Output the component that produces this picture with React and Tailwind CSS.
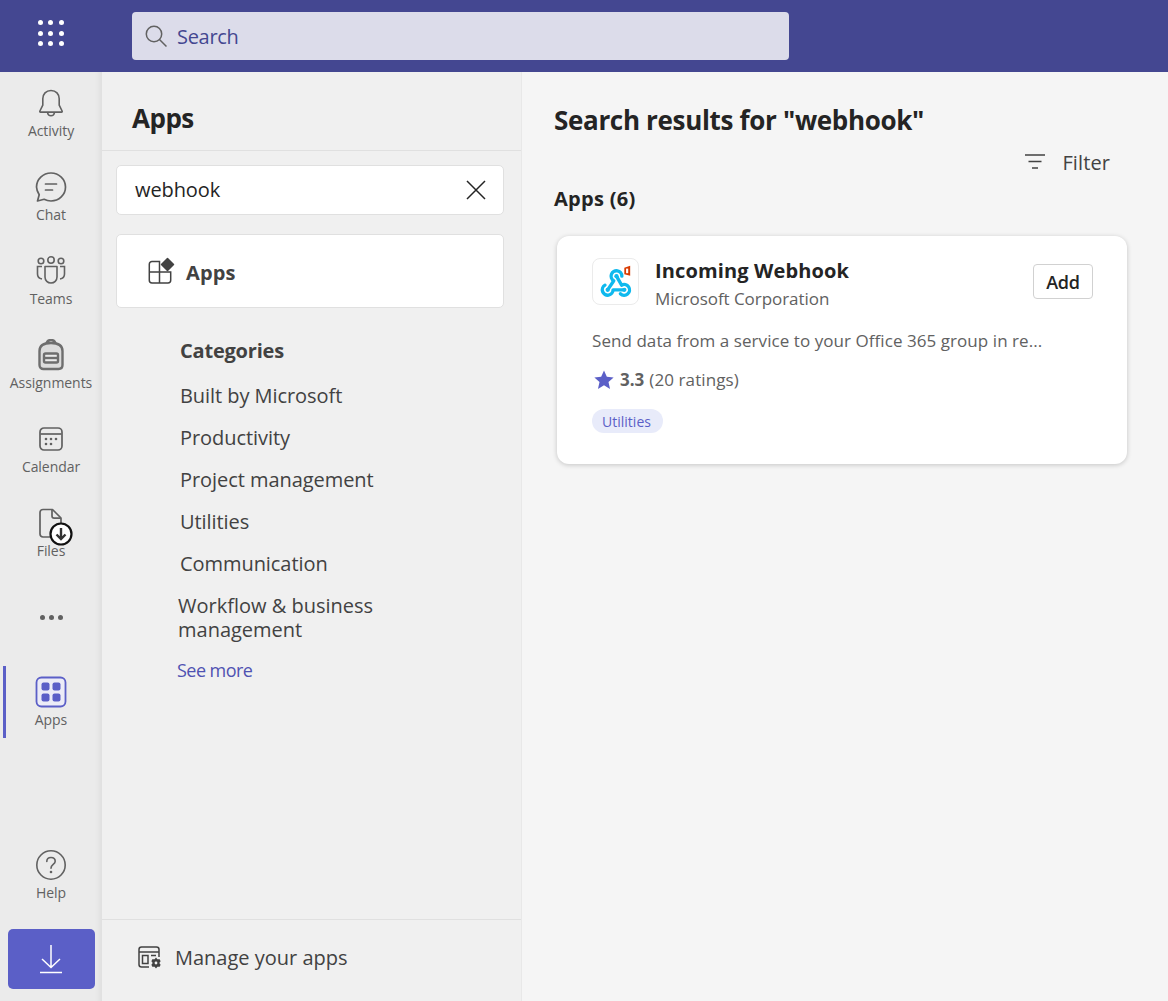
import React from "react";

const font = { fontFamily: '"Open Sans", "Noto Sans", sans-serif' };

const Bell = () => (
  <svg width="32" height="32" viewBox="0 0 32 32" fill="none" stroke="#616161" strokeWidth="1.6">
    <path d="M16 3.500c-5 0-8.200 3.600-8.200 8.300v6.400L4.900 24c-.3.600 0 1.100.6 1.100h21c.6 0 .9-.5.6-1.100l-2.900-5.800v-6.400c0-4.700-3.200-8.300-8.200-8.300z" strokeLinejoin="round" />
    <path d="M12.500 25.500c.3 2 1.700 3.200 3.500 3.200s3.200-1.200 3.500-3.200" />
  </svg>
);

const ChatIcon = () => (
  <svg width="32" height="32" viewBox="0 0 32 32" fill="none" stroke="#616161" strokeWidth="1.7">
    <path d="M16 2c8 0 14.500 6.200 14.500 14S24 30 16 30c-2.500 0-4.800-.6-6.900-1.700L2.500 30l1.700-6.300C2.900 21.500 1.500 19 1.500 16 1.500 8.200 8 2 16 2z" strokeLinejoin="round" />
    <path d="M10.500 13h11M10.500 19h7" strokeLinecap="round" />
  </svg>
);

const TeamsIcon = () => (
  <svg width="32" height="32" viewBox="0 0 32 32" fill="none" stroke="#616161" strokeWidth="1.6">
    <circle cx="16" cy="5" r="3.200" />
    <circle cx="6" cy="6" r="2.800" />
    <circle cx="26" cy="6" r="2.800" />
    <path d="M10 11.500h12v10.500c0 3.500-2.700 6-6 6s-6-2.500-6-6z" strokeLinejoin="round" />
    <path d="M7 11.500H2.500V19c0 2.700 1.700 4.500 4.500 5M25 11.500h4.500V19c0 2.700-1.700 4.500-4.500 5" />
  </svg>
);

const BagIcon = () => (
  <svg width="32" height="32" viewBox="0 0 32 32" fill="none" stroke="#6e6e6e" strokeWidth="2.400">
    <path d="M11.500 4.500C12 2 14 1 16 1s4 1 4.500 3.500" />
    <path d="M4.500 12c0-5 4-8 11.500-8s11.500 3 11.500 8v14c0 2.200-1.500 4-4 4H8.500c-2.500 0-4-1.800-4-4z" fill="#dcdcdc" />
    <rect x="9" y="14.500" width="14" height="9" rx="1.500" fill="#ebebeb" />
    <path d="M9 19h14" />
  </svg>
);

const CalendarIcon = () => (
  <svg width="32" height="32" viewBox="0 0 32 32" fill="none" stroke="#616161" strokeWidth="1.7">
    <rect x="5" y="5" width="22" height="22" rx="4" />
    <path d="M5.500 11h21" />
    <g fill="#616161" stroke="none">
      <circle cx="16" cy="16" r="1.300" />
      <circle cx="21" cy="16" r="1.300" />
      <circle cx="11" cy="16" r="1.300" />
      <circle cx="11" cy="21" r="1.300" />
      <circle cx="16" cy="21" r="1.300" />
    </g>
  </svg>
);

const FilesIcon = () => (
  <div className="relative w-8 h-8">
    <svg width="32" height="32" viewBox="0 0 32 32" fill="none" stroke="#616161" strokeWidth="1.7">
      <path d="M8 2.500h9.500L26 11v16c0 1.600-1.200 3-3 3H8c-1.800 0-3-1.400-3-3V5.500c0-1.600 1.200-3 3-3z" strokeLinejoin="round" />
      <path d="M17 3v6c0 1.400.8 2.200 2.200 2.200H26" />
    </svg>
    <div className="absolute left-[14px] top-[15px] w-[24px] h-[24px]">
      <svg width="24" height="24" viewBox="0 0 24 24" fill="none">
        <circle cx="12" cy="12" r="10.500" fill="#ffffff" stroke="#111111" strokeWidth="2.200" />
        <path d="M12 6v11M7.500 12.500l4.500 4.500 4.500-4.500" stroke="#333333" strokeWidth="2.400" />
      </svg>
    </div>
  </div>
);

const AppsRailIcon = () => (
  <svg width="32" height="32" viewBox="0 0 32 32" fill="none">
    <rect x="1.500" y="1.500" width="29" height="29" rx="5" stroke="#5b5fc7" strokeWidth="1.800" fill="#ececf7" />
    <rect x="6.500" y="6.500" width="8" height="8" rx="2" fill="#5b5fc7" />
    <rect x="17.500" y="6.500" width="8" height="8" rx="2" fill="#5b5fc7" />
    <rect x="6.500" y="17.500" width="8" height="8" rx="2" fill="#5b5fc7" />
    <rect x="17.500" y="17.500" width="8" height="8" rx="2" fill="#5b5fc7" />
  </svg>
);

const HelpIcon = () => (
  <svg width="32" height="32" viewBox="0 0 32 32" fill="none" stroke="#616161" strokeWidth="1.600">
    <circle cx="16" cy="16" r="14.200" />
    <path d="M11.800 12.500c0-2.500 1.800-4 4.200-4s4.200 1.500 4.200 3.700c0 3.300-4.200 3.300-4.200 7" strokeLinecap="round" />
    <circle cx="16" cy="23" r="1.300" fill="#616161" stroke="none" />
  </svg>
);

const RailItem = ({ icon, label }) => (
  <div className="h-[84px] flex flex-col items-center">
    {icon}
    <span className="text-[14px] leading-[24px] tracking-[-0.05px] text-[#616161]">{label}</span>
  </div>
);

const WebhookLogo = () => (
  <svg width="46" height="46" viewBox="0 0 46 46" fill="none">
    <g stroke="#0fb9ee" strokeWidth="3.400" strokeLinecap="round" strokeLinejoin="round">
      <path d="M15 31l6.250-9.240A5.500 5.500 0 1 1 29.500 17" />
      <path d="M24 17l5.250 9.240A5.500 5.500 0 1 1 28 35" />
      <path d="M32 31H20.500A5.500 5.500 0 1 1 12.250 26.240" />
    </g>
    <circle cx="24" cy="17" r="2.200" fill="#0fb9ee" />
    <circle cx="15" cy="31" r="2.200" fill="#0fb9ee" />
    <circle cx="32" cy="31" r="2.200" fill="#0fb9ee" />
    <path d="M32 8.500l6-2v10l-6-1.500z" fill="#d83b01" />
    <path d="M33.800 9.300h2.200v4.700h-2.200z" fill="#ffffff" />
  </svg>
);

const categories = ["Built by Microsoft", "Productivity", "Project management", "Utilities", "Communication"];

export default function App() {
  return (
    <div className="w-full h-screen overflow-hidden flex flex-col bg-[#f5f5f5]" style={font}>
      {/* Top bar */}
      <header className="h-[72px] shrink-0 bg-[#444791] flex items-center">
        <div className="w-[102px] flex justify-center pr-[1px] -mt-[6px]">
          <div className="grid grid-cols-3 gap-x-[5.5px] gap-y-[5.5px]">
            {[0, 1, 2, 3, 4, 5, 6, 7, 8].map((i) => (
              <span key={i} className="w-[5px] h-[5px] rounded-full bg-white" />
            ))}
          </div>
        </div>
        <div className="ml-[30px] w-[657px] h-[48px] rounded-[4px] bg-[#dcdcea] flex items-center pl-[12px]">
          <svg width="24" height="24" viewBox="0 0 24 24" fill="none" stroke="#616161" strokeWidth="1.500">
            <circle cx="10" cy="10" r="7.700" />
            <path d="M15.500 15.500l7 7" />
          </svg>
          <span className="ml-[9px] mt-[1px] text-[20px] text-[#444791] tracking-[-0.3px]">Search</span>
        </div>
      </header>

      <div className="flex-1 flex min-h-0">
        {/* Rail */}
        <nav className="relative w-[102px] shrink-0 bg-[#ebebeb] pt-[15px] flex flex-col shadow-[inset_-6px_0_5px_-3px_rgba(0,0,0,0.05)]">
          <RailItem icon={<Bell />} label="Activity" />
          <RailItem icon={<ChatIcon />} label="Chat" />
          <RailItem icon={<TeamsIcon />} label="Teams" />
          <RailItem icon={<BagIcon />} label="Assignments" />
          <RailItem icon={<CalendarIcon />} label="Calendar" />
          <RailItem icon={<FilesIcon />} label="Files" />
          <div className="h-[85px] flex justify-center pt-[24px] gap-[4px]">
            <span className="w-[5px] h-[5px] rounded-full bg-[#616161]" />
            <span className="w-[5px] h-[5px] rounded-full bg-[#616161]" />
            <span className="w-[5px] h-[5px] rounded-full bg-[#616161]" />
          </div>
          <RailItem icon={<AppsRailIcon />} label="Apps" />
          <span className="absolute left-[3px] top-[594px] w-[3px] h-[72px] bg-[#5b5fc7]" />
          <div className="mt-auto">
            <RailItem icon={<HelpIcon />} label="Help" />
            <div className="mx-[8px] mb-[12px] -mt-[4px] w-[87px] h-[60px] rounded-[5px] bg-[#5b5fc7] flex items-center justify-center pr-[2px]">
              <svg width="24" height="30" viewBox="0 0 24 30" fill="none" stroke="#ffffff" strokeWidth="1.500">
                <path d="M12 1v22M3 15l9 8.500 9-8.500M1 28.500h22" />
              </svg>
            </div>
          </div>
        </nav>

        {/* Middle panel */}
        <aside className="w-[420px] shrink-0 bg-[#f0f0f0] border-r border-[#e8e8e8] flex flex-col">
          <div className="h-[79px] shrink-0 border-b border-[#e0e0e0] pl-[30px] pt-[27px]">
            <h1 className="text-[26px] leading-[38px] font-bold text-[#242424] tracking-[-0.5px]">Apps</h1>
          </div>
          <div className="ml-[14px] mr-[17px] mt-[14px] h-[50px] bg-white border border-[#e0e0e0] rounded-[5px] flex items-center justify-between pl-[18px] pr-[16px]">
            <span className="text-[20px] text-[#242424] tracking-[-0.1px]">webhook</span>
            <svg width="22" height="22" viewBox="0 0 22 22" fill="none" stroke="#242424" strokeWidth="1.500">
              <path d="M2 2l18 18M20 2L2 20" />
            </svg>
          </div>
          <div className="ml-[14px] mr-[17px] mt-[19px] h-[74px] bg-white border border-[#e0e0e0] rounded-[5px] flex items-center pl-[30px]">
            <svg width="28" height="28" viewBox="0 0 28 28" fill="none" stroke="#424242" strokeWidth="1.500">
              <path d="M12.500 4.500H5c-1.500 0-2.700 1.100-2.700 2.700v16c0 1.500 1.200 2.700 2.700 2.700h16c1.500 0 2.700-1.200 2.700-2.700V15H12.500zM12.500 15v11M2.500 15h10" />
              <path d="M20.500 1.500l6 6-6 6-6-6z" fill="#424242" strokeLinejoin="round" />
            </svg>
            <span className="ml-[11px] mt-[3px] text-[20px] font-bold text-[#424242] tracking-[0.1px]">Apps</span>
          </div>
          <div className="pl-[76px] pt-[27px] flex-1">
            <div className="pl-[2px] text-[20px] leading-[32px] font-bold text-[#424242] tracking-[-0.2px]">Categories</div>
            {categories.map((c, i) => (
              <div key={c} className={`pl-[2px] text-[20px] leading-[24px] text-[#424242] tracking-[-0.06px] ${i === 0 ? "mt-[17px]" : "mt-[18px]"}`}>
                {c}
              </div>
            ))}
            <div className="mt-[18px] text-[20px] leading-[24px] text-[#424242]">
              Workflow & business
              <br />
              management
            </div>
            <div className="-ml-[1px] mt-[16px] text-[18px] leading-[24px] text-[#4f52b2] tracking-[-0.55px]">See more</div>
          </div>
          <div className="h-[82px] shrink-0 border-t border-[#e0e0e0] flex items-center pl-[35px] pb-[5px]">
            <svg width="26" height="26" viewBox="0 0 26 26" fill="none" stroke="#424242" strokeWidth="1.500">
              <path d="M12 22H4.500C2.800 22 2 21 2 19.500v-15C2 3 3 2 4.500 2h15C21 2 22 3 22 4.500V12M2.500 7h19" />
              <path d="M5.500 10.500h5.500v8H5.500zM14 10.500h5" />
              <path d="M19 12.500l1.400 1.800h2.300l.9 2-1.300 1.700 1.300 1.700-.9 2h-2.300L19 23.500l-1.400-1.800h-2.300l-.9-2 1.300-1.700-1.300-1.700.9-2h2.300z" fill="#424242" stroke="none" />
              <circle cx="19" cy="18" r="1.400" fill="#f0f0f0" stroke="none" />
            </svg>
            <span className="ml-[12px] text-[20px] text-[#424242]">Manage your apps</span>
          </div>
        </aside>

        {/* Results */}
        <main className="flex-1 min-w-0 pl-[32px] pr-[40px] pt-[28px]">
          <h2 className="text-[26px] leading-[40px] font-bold text-[#242424] tracking-[-0.33px]">Search results for "webhook"</h2>
          <div className="flex justify-end items-center mt-[11px] pr-[18px] h-[24px]">
            <svg width="22" height="18" viewBox="0 0 22 18" fill="none" stroke="#424242" strokeWidth="1.400" className="-mt-[3px]">
              <path d="M1 2h20M4.500 8.500h13M8 15h6" />
            </svg>
            <span className="ml-[16px] text-[20px] font-medium text-[#424242] tracking-[0.1px]">Filter</span>
          </div>
          <h3 className="mt-[10px] text-[20px] leading-[28px] font-bold text-[#242424] tracking-[0.3px]">Apps (6)</h3>
          <div className="mt-[23px] ml-[3px] w-[570px] h-[228px] bg-white rounded-[12px] shadow-[0_1px_5px_rgba(0,0,0,0.2)] pl-[35px] pr-[34px] pt-[22px]">
            <div className="flex items-start">
              <div className="w-[47px] h-[47px] rounded-[8px] border border-[#ebebeb] flex items-center justify-center">
                <WebhookLogo />
              </div>
              <div className="ml-[16px] flex-1">
                <div className="text-[20px] leading-[26px] font-bold text-[#242424] tracking-[0.13px]">Incoming Webhook</div>
                <div className="text-[17px] leading-[30px] text-[#616161] tracking-[-0.05px]">Microsoft Corporation</div>
              </div>
              <div className="mt-[6px] w-[60px] h-[35px] pt-[1px] bg-white border border-[#d1d1d1] rounded-[4px] flex items-center justify-center text-[18px] font-semibold text-[#242424] tracking-[-0.2px]">
                Add
              </div>
            </div>
            <p className="mt-[15px] text-[17px] leading-[24px] text-[#616161] tracking-[0.06px] whitespace-nowrap">
              Send data from a service to your Office 365 group in re...
            </p>
            <div className="mt-[15px] flex items-center h-[24px]">
              <svg width="22" height="22" viewBox="0 0 24 24" className="ml-[1px]">
                <path d="M12 1.500l3.100 7 7.400.7-5.600 5 1.700 7.500L12 17.800l-6.600 3.900 1.700-7.500-5.600-5 7.400-.7z" fill="#5b5fc7" />
              </svg>
              <span className="ml-[5px] text-[17px] font-bold text-[#616161]">3.3</span>
              <span className="ml-[5px] text-[17px] text-[#616161] tracking-[0.1px]">(20 ratings)</span>
            </div>
            <div className="mt-[17px] inline-flex items-center h-[24px] w-[71px] justify-center pr-[2px] rounded-full bg-[#e8ebfa] text-[14px] text-[#5b5fc7]">
              Utilities
            </div>
          </div>
        </main>
      </div>
    </div>
  );
}
